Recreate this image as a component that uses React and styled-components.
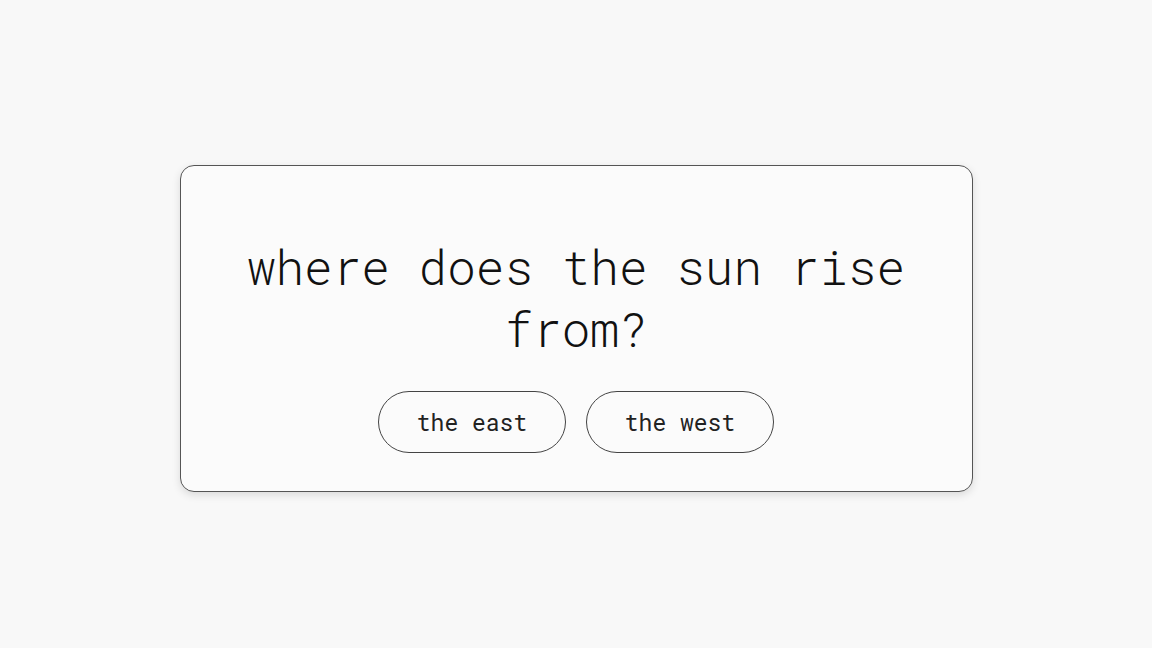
import styled, { createGlobalStyle } from "styled-components";

const GlobalStyle = createGlobalStyle`
    html, body {
        margin: 0;
        padding: 0;
        background: #f8f8f8;
    }
    body {
        font-family: "Roboto Mono", "Liberation Mono", "DejaVu Sans Mono", monospace;
        color: #111;
    }
`;

const answers = ["the east", "the west"];

const App = () => {
    return (
        <Page>
            <GlobalStyle />
            <Card>
                <Question>where does the sun rise from?</Question>
                <Answers>
                    {answers.map((answer) => (
                        <AnswerButton key={answer}>{answer}</AnswerButton>
                    ))}
                </Answers>
            </Card>
        </Page>
    );
};
export default App;

const Page = styled.main`
    width: 100%;
    height: 648px;
    display: flex;
    justify-content: center;
    align-items: flex-start;
    padding-top: 165px;
    box-sizing: border-box;
`;

const Card = styled.section`
    width: 793px;
    box-sizing: border-box;
    padding: 70px 64px 38px;
    background: #fbfbfb;
    border: 1px solid #555;
    border-radius: 14px;
    box-shadow: 0 3px 8px rgba(0, 0, 0, 0.12);
    display: flex;
    flex-direction: column;
    align-items: center;
    gap: 31px;
`;

const Question = styled.h1`
    margin: 0;
    font-size: 47.7px;
    font-weight: 300;
    line-height: 62px;
    text-align: center;
    color: #111;
`;

const Answers = styled.div`
    display: flex;
    gap: 20px;
`;

const AnswerButton = styled.button`
    width: 188px;
    height: 62px;
    border: 1px solid #444;
    border-radius: 31px;
    background: transparent;
    font-family: inherit;
    font-size: 23px;
    font-weight: 400;
    color: #222;
    cursor: pointer;
`;
